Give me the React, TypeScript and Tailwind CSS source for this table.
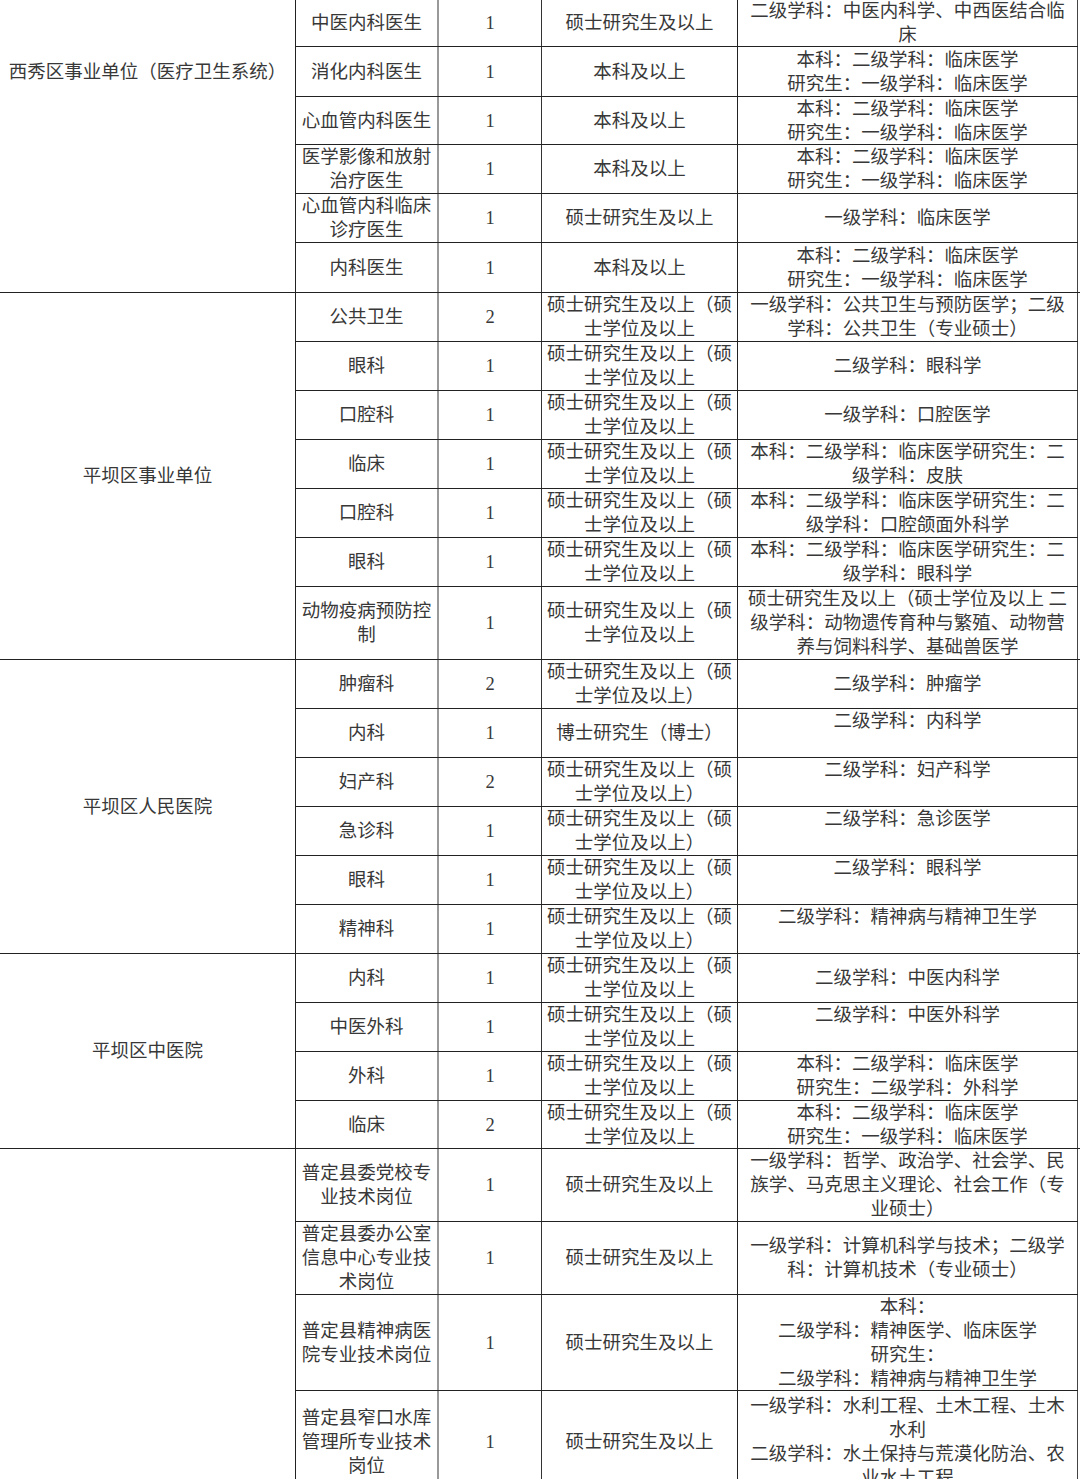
type Row = { h: number; name: string[]; n: string; edu: string[]; major: string[] }
type Group = { title: string; top?: boolean; rows: Row[] }

const EDU2 = ['硕士研究生及以上（硕', '士学位及以上']
const EDU2P = ['硕士研究生及以上（硕', '士学位及以上）']
const MASTER = ['硕士研究生及以上']
const BENKE = ['本科及以上']
const CLIN = ['本科：二级学科：临床医学', '研究生：一级学科：临床医学']

const GROUPS: Group[] = [
  {
    title: '西秀区事业单位（医疗卫生系统）',
    top: true,
    rows: [
      { h: 47, name: ['中医内科医生'], n: '1', edu: MASTER, major: ['二级学科：中医内科学、中西医结合临', '床'] },
      { h: 50, name: ['消化内科医生'], n: '1', edu: BENKE, major: CLIN },
      { h: 48, name: ['心血管内科医生'], n: '1', edu: BENKE, major: CLIN },
      { h: 49, name: ['医学影像和放射', '治疗医生'], n: '1', edu: BENKE, major: CLIN },
      { h: 49, name: ['心血管内科临床', '诊疗医生'], n: '1', edu: MASTER, major: ['一级学科：临床医学'] },
      { h: 49, name: ['内科医生'], n: '1', edu: BENKE, major: CLIN },
    ],
  },
  {
    title: '平坝区事业单位',
    rows: [
      { h: 49, name: ['公共卫生'], n: '2', edu: EDU2, major: ['一级学科：公共卫生与预防医学；二级', '学科：公共卫生（专业硕士）'] },
      { h: 49, name: ['眼科'], n: '1', edu: EDU2, major: ['二级学科：眼科学'] },
      { h: 49, name: ['口腔科'], n: '1', edu: EDU2, major: ['一级学科：口腔医学'] },
      { h: 49, name: ['临床'], n: '1', edu: EDU2, major: ['本科：二级学科：临床医学研究生：二', '级学科：皮肤'] },
      { h: 49, name: ['口腔科'], n: '1', edu: EDU2, major: ['本科：二级学科：临床医学研究生：二', '级学科：口腔颌面外科学'] },
      { h: 49, name: ['眼科'], n: '1', edu: EDU2, major: ['本科：二级学科：临床医学研究生：二', '级学科：眼科学'] },
      {
        h: 72,
        name: ['动物疫病预防控', '制'],
        n: '1',
        edu: EDU2,
        major: ['硕士研究生及以上（硕士学位及以上 二', '级学科：动物遗传育种与繁殖、动物营', '养与饲料科学、基础兽医学'],
      },
    ],
  },
  {
    title: '平坝区人民医院',
    rows: [
      { h: 49, name: ['肿瘤科'], n: '2', edu: EDU2P, major: ['二级学科：肿瘤学'] },
      { h: 49, name: ['内科'], n: '1', edu: ['博士研究生（博士）'], major: ['二级学科：内科学', ''] },
      { h: 49, name: ['妇产科'], n: '2', edu: EDU2P, major: ['二级学科：妇产科学', ''] },
      { h: 49, name: ['急诊科'], n: '1', edu: EDU2P, major: ['二级学科：急诊医学', ''] },
      { h: 49, name: ['眼科'], n: '1', edu: EDU2P, major: ['二级学科：眼科学', ''] },
      { h: 48, name: ['精神科'], n: '1', edu: EDU2P, major: ['二级学科：精神病与精神卫生学', ''] },
    ],
  },
  {
    title: '平坝区中医院',
    rows: [
      { h: 49, name: ['内科'], n: '1', edu: EDU2, major: ['二级学科：中医内科学'] },
      { h: 49, name: ['中医外科'], n: '1', edu: EDU2, major: ['二级学科：中医外科学', ''] },
      { h: 49, name: ['外科'], n: '1', edu: EDU2, major: ['本科：二级学科：临床医学', '研究生：二级学科：外科学'] },
      { h: 47, name: ['临床'], n: '2', edu: EDU2, major: CLIN },
    ],
  },
  {
    title: '',
    rows: [
      {
        h: 73,
        name: ['普定县委党校专', '业技术岗位'],
        n: '1',
        edu: MASTER,
        major: ['一级学科：哲学、政治学、社会学、民', '族学、马克思主义理论、社会工作（专', '业硕士）'],
      },
      {
        h: 73,
        name: ['普定县委办公室', '信息中心专业技', '术岗位'],
        n: '1',
        edu: MASTER,
        major: ['一级学科：计算机科学与技术；二级学', '科：计算机技术（专业硕士）'],
      },
      {
        h: 96,
        name: ['普定县精神病医', '院专业技术岗位'],
        n: '1',
        edu: MASTER,
        major: ['本科：', '二级学科：精神医学、临床医学', '研究生：', '二级学科：精神病与精神卫生学'],
      },
      {
        h: 102,
        name: ['普定县窄口水库', '管理所专业技术', '岗位'],
        n: '1',
        edu: MASTER,
        major: ['一级学科：水利工程、土木工程、土木', '水利', '二级学科：水土保持与荒漠化防治、农', '业水土工程'],
      },
    ],
  },
]

function Lines({ lines }: { lines: string[] }) {
  return (
    <div className="text-center whitespace-nowrap">
      {lines.map((l, i) => (
        <div key={i}>{l || '\u00a0'}</div>
      ))}
    </div>
  )
}

export default function App() {
  return (
    <div
      className="w-[1080px] h-[1479px] overflow-hidden bg-white text-[#383838] text-[18.5px] leading-[24px]"
      style={{ fontFamily: '"Liberation Serif", "Noto Sans CJK SC", serif' }}
    >
      {GROUPS.map((g, gi) => (
        <div key={gi} className={`flex ${gi < GROUPS.length - 1 ? 'border-b border-[#222]' : ''}`}>
          {/* 单位 */}
          <div
            className={`w-[296px] shrink-0 border-r border-[#222] flex justify-center ${
              g.top ? 'items-start pt-[60px]' : 'items-center'
            }`}
          >
            <Lines lines={[g.title]} />
          </div>

          <div className="flex flex-col">
            {g.rows.map((r, ri) => (
              <div
                key={ri}
                className={`flex ${ri < g.rows.length - 1 ? 'border-b border-[#222]' : ''}`}
                style={{ height: r.h }}
              >
                <div className="w-[143px] shrink-0 border-r-2 border-[#999] flex items-center justify-center">
                  <Lines lines={r.name} />
                </div>
                <div className="w-[103px] shrink-0 border-r border-[#333] flex items-center justify-center">
                  {r.n}
                </div>
                <div className="w-[196px] shrink-0 border-r border-[#222] flex items-center justify-center">
                  <Lines lines={r.edu} />
                </div>
                <div className="w-[340px] shrink-0 border-r border-[#444] flex items-center justify-center">
                  <Lines lines={r.major} />
                </div>
              </div>
            ))}
          </div>
        </div>
      ))}
    </div>
  )
}
